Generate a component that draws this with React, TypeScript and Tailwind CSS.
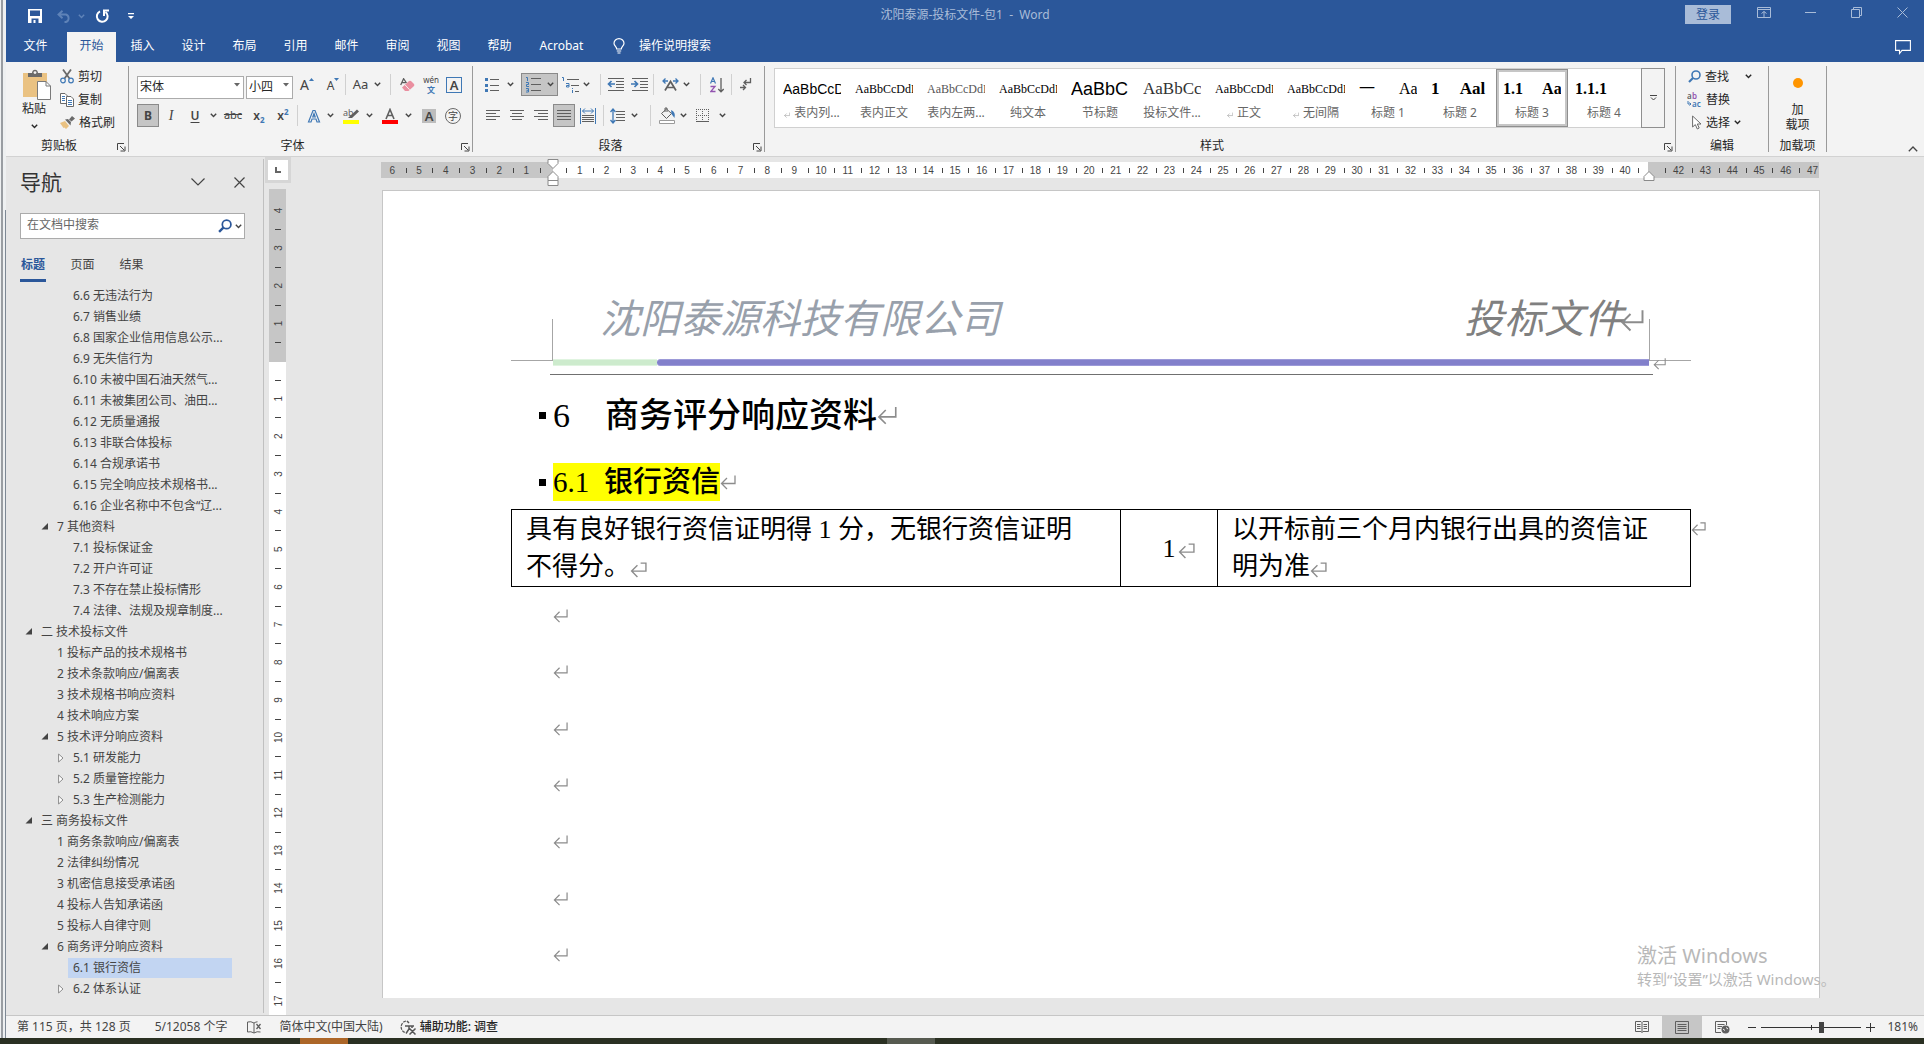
import React from "react";
import clsx from "clsx";

type IconProps = { className?: string };

const GRAY = "#5f5f5f";
const BLUE = "#3f78b5";

const Chevron = ({ className = "" }: IconProps) => (
  <svg width="7" height="5" viewBox="0 0 7 5" className={className}>
    <path d="M.8 .8 L3.5 3.5 L6.2 .8" fill="none" stroke="currentColor" strokeWidth="1.4" />
  </svg>
);

const Launcher = () => (
  <button aria-label="更多选项" className="absolute right-0.5 bottom-0">
    <svg width="9" height="9" viewBox="0 0 9 9" fill="none" stroke="#444">
      <path d="M.5 7 V.5 H7 M3 3 L7 7 M8 3.5 V8 H3.5" />
    </svg>
  </button>
);

const ReturnMark = ({
  size = 15,
  cell = false,
  className = "",
}: {
  size?: number;
  cell?: boolean;
  className?: string;
}) => (
  <svg
    width={size}
    height={size}
    viewBox="0 0 16 16"
    fill="none"
    stroke="#8c8c8c"
    strokeWidth="1.3"
    className={clsx("inline-block shrink-0", className)}
  >
    <path d={cell ? "M10 2 H15 V9.5 H1.5 M7 4 L1.5 9.5 L7 15" : "M15 1.5 V9.5 H1.5 M7 4 L1.5 9.5 L7 15"} />
  </svg>
);

const Tool = ({
  label,
  className = "w-6",
  active = false,
  children,
}: {
  label: string;
  className?: string;
  active?: boolean;
  children: React.ReactNode;
}) => (
  <button
    aria-label={label}
    className={clsx(
      "h-[23px] shrink-0 flex items-center justify-center text-[#444]",
      active && "bg-[#c5c5c5] border border-[#8a8a8a]",
      className,
    )}
  >
    {children}
  </button>
);

const Divider = ({ className = "mx-2" }: IconProps) => (
  <span className={clsx("w-px h-[21px] shrink-0 bg-[#d0d0d0]", className)} />
);

const Group = ({
  title,
  className,
  launcher = true,
  children,
}: {
  title: string;
  className: string;
  launcher?: boolean;
  children: React.ReactNode;
}) => (
  <section
    className={clsx(
      "relative h-[86px] mt-1 flex flex-col justify-between border-r border-[#9a9a9a] shrink-0",
      className,
    )}
  >
    {children}
    <h2 className={clsx("text-center text-[12px] leading-4 h-3.5", launcher && "pr-4")}>{title}</h2>
    {launcher && <Launcher />}
  </section>
);

// Horizontal lines at the given spans, used by all the paragraph icons
const Lines = ({ rows, stroke = GRAY }: { rows: number[][]; stroke?: string }) => (
  <path d={rows.map(([x1, x2, y]) => `M${x1} ${y}.5H${x2}`).join("")} stroke={stroke} fill="none" />
);

const AlignIcon = ({ rows }: { rows: number[][] }) => (
  <svg width="15" height="12" viewBox="0 0 15 12">
    <Lines rows={rows} />
  </svg>
);

const Magnifier = ({ size = 13, color = BLUE }: { size?: number; color?: string }) => (
  <svg width={size} height={size} viewBox="0 0 13 13" fill="none" stroke={color}>
    <circle cx="8" cy="5" r="4" strokeWidth="1.6" />
    <path d="M5 8 L1 12" strokeWidth="2.2" />
  </svg>
);

const tabs = ["插入", "设计", "布局", "引用", "邮件", "审阅", "视图", "帮助"];

const TitleBar = () => (
  <div className="h-8 flex items-center text-[#a9bcd8] relative">
    <div className="flex items-center pl-[22px] text-white">
      <button aria-label="保存">
        <svg width="14" height="14" viewBox="0 0 14 14">
          <path d="M0 0 H14 V14 H0 Z M2 1.5 V7 H12 V1.5 Z M3.5 9.5 V14 H5.5 V11 H7.5 V14 H10.5 V9.5 Z" fill="#fff" fillRule="evenodd" />
        </svg>
      </button>
      <button aria-label="撤消" className="ml-[15px] flex items-center gap-1.5 text-[#5f83b8]">
        <svg width="15" height="13" viewBox="0 0 15 13" fill="none" stroke="currentColor" strokeWidth="1.9">
          <path d="M5.5 .8 L1.5 4.5 L5.5 8.2 M1.8 4.5 H9 A4 4 0 0 1 9 12 H7.5" />
        </svg>
        <Chevron />
      </button>
      <button aria-label="重复" className="ml-2.5">
        <svg width="15" height="15" viewBox="0 0 15 15" fill="none" stroke="#fff" strokeWidth="2">
          <path d="M5 2.4 A5.4 5.4 0 1 0 10.5 3" />
          <path d="M9 7 V1.6 H14" />
        </svg>
      </button>
      <button aria-label="自定义快速访问工具栏" className="ml-[18px]">
        <svg width="6" height="7" viewBox="0 0 6 7" fill="#fff">
          <path d="M0 0 H6 V1.2 H0 Z M0 3 H6 L3 6 Z" />
        </svg>
      </button>
    </div>
    <h1 className="absolute left-1/2 -translate-x-1/2 bottom-2 text-[12px] leading-[18px] whitespace-pre">
      沈阳泰源-投标文件-包1{"  "}-{"  "}Word
    </h1>
    <div className="ml-auto flex items-center pr-4 pb-2">
      <button className="w-[46px] h-[19px] mt-1 mr-[26px] bg-[#a9bcd8] text-[#2b579a] text-[12px] leading-[19px]">登录</button>
      <button aria-label="功能区显示选项">
        <svg width="14" height="11" viewBox="0 0 14 11" fill="none" stroke="currentColor">
          <path d="M.5 .5 H13.5 V10.5 H.5 Z M.5 2.5 H13.5 M7 10 V4.5 M4.5 6.5 L7 4.5 L9.5 6.5" />
        </svg>
      </button>
      <button aria-label="最小化" className="ml-[34px]">
        <svg width="11" height="11" viewBox="0 0 11 11" stroke="currentColor">
          <path d="M0 5.5 H11" />
        </svg>
      </button>
      <button aria-label="向下还原" className="ml-[35px]">
        <svg width="11" height="11" viewBox="0 0 11 11" fill="none" stroke="currentColor">
          <path d="M.5 2.5 H8.5 V10.5 H.5 Z M2.5 2.5 V.5 H10.5 V8.5 H8.5" />
        </svg>
      </button>
      <button aria-label="关闭" className="ml-[35px]">
        <svg width="11" height="11" viewBox="0 0 11 11" stroke="currentColor">
          <path d="M.5 .5 L10.5 10.5 M10.5 .5 L.5 10.5" />
        </svg>
      </button>
    </div>
  </div>
);

const TabBar = () => (
  <nav className="h-[30px] flex gap-0.5 text-white text-[12px]">
    <button className="w-[59px] pb-0.5">文件</button>
    <button className="w-[49px] pb-0.5 bg-[#f3f3f3] text-[#2b579a]">开始</button>
    {tabs.map((tab) => (
      <button key={tab} className="w-[49px] pb-0.5">
        {tab}
      </button>
    ))}
    <button className="w-[71px] pb-0.5">Acrobat</button>
    <button className="ml-[14px] pb-0.5 flex items-center gap-[14px]">
      <svg width="12" height="16" viewBox="0 0 12 16" fill="none" stroke="#fff" strokeWidth="1.2">
        <path d="M3.7 11 C3.7 8.8 1 8 1 5.2 A5 4.6 0 0 1 11 5.2 C11 8 8.3 8.8 8.3 11 Z M3.8 13 H8.2 M4.5 15 H7.5" />
      </svg>
      操作说明搜索
    </button>
    <button aria-label="批注" className="ml-auto mr-[13px]">
      <svg width="16" height="15" viewBox="0 0 16 15" fill="none" stroke="#fff" strokeWidth="1.1">
        <path d="M.6 .6 H15.4 V10.4 H7 L4.5 13.5 V10.4 H.6 Z" />
      </svg>
    </button>
  </nav>
);

const ClipboardGroup = () => (
  <Group title="剪贴板" className="w-[123px]">
    <div className="flex">
      <button className="w-[54px] pl-1.5 pr-1 flex flex-col items-center text-[12px] leading-[18px]">
        <svg width="29" height="31" viewBox="0 0 29 31" className="mt-[3px] ml-1">
          <path d="M1 4 H25 V28 H1 Z" fill="#eac282" />
          <path d="M6 8 V4 H10 C10 -.5 16 -.5 16 4 H20 V8 Z" fill="#6a6a6a" />
          <circle cx="13" cy="3.6" r="1.4" fill="#f3f3f3" />
          <path d="M15.5 12.5 H24 L28.5 17 V30.5 H15.5 Z" fill="#fff" stroke="#7a7a7a" />
          <path d="M24 12.5 V17 H28.5" fill="none" stroke="#7a7a7a" />
        </svg>
        <span>粘贴</span>
        <Chevron className="mt-1.5" />
      </button>
      <div className="flex flex-col -mt-px text-[12px]">
        <button className="h-[23px] flex items-center gap-1">
          <svg width="14" height="15" viewBox="0 0 14 15" fill="none">
            <path d="M3 .5 L9.5 9.5 M11 .5 L4.5 9.5" stroke="#6a6a6a" strokeWidth="1.8" />
            <circle cx="3" cy="11.5" r="2.3" stroke={BLUE} strokeWidth="1.2" />
            <circle cx="11" cy="11.5" r="2.3" stroke={BLUE} strokeWidth="1.2" />
          </svg>
          剪切
        </button>
        <button className="h-[23px] flex items-center gap-1">
          <svg width="14" height="14" viewBox="0 0 14 14" fill="#fff" stroke="#6a6a6a">
            <path d="M.5 .5 H5 L7.5 3 V10.5 H.5 Z" />
            <path d="M6.5 3.5 H11 L13.5 6 V13.5 H6.5 Z" />
            <path d="M8 7.5 H12 M8 9.5 H12 M8 11.5 H12 M2 3.5 H5 M2 5.5 H5 M2 7.5 H5" stroke={BLUE} />
          </svg>
          复制
        </button>
        <button className="h-[23px] flex items-center gap-1">
          <svg width="15" height="14" viewBox="0 0 15 14">
            <path d="M0 7 L5 5 L9 10 L6 13 L4.5 11.5 L3.5 12 Z" fill="#eac282" />
            <path d="M5 3.5 L8 3 L11 6 L10.5 9.5 Z M9 3.5 L12 0 L15 2.5 L11.5 5.5 Z" fill="#6a6a6a" />
          </svg>
          格式刷
        </button>
      </div>
    </div>
  </Group>
);

const Combo = ({ label, value, className }: { label: string; value: string; className: string }) => (
  <div className={clsx("relative h-[23px] shrink-0", className)}>
    <select
      aria-label={label}
      className="appearance-none w-full h-full bg-white border border-[#ababab] pl-0.5 text-[12px] text-[#262626]"
    >
      <option>{value}</option>
    </select>
    <svg width="6" height="4" viewBox="0 0 6 4" className="absolute right-1 top-2.5 pointer-events-none">
      <path d="M0 0 H6 L3 3.5 Z" fill="#666" />
    </svg>
  </div>
);

const FontGroup = () => (
  <Group title="字体" className="w-[344px]">
    <div className="flex flex-col gap-2 pt-[7px] pl-2">
      <div className="flex items-center">
        <Combo label="字体" value="宋体" className="w-[107px] mr-0.5" />
        <Combo label="字号" value="小四" className="w-[47px]" />
        <Tool label="增大字号" className="w-7">
          <span className="text-[14px]">A</span>
          <svg width="5" height="3" viewBox="0 0 5 3" className="mb-2.5">
            <path d="M0 3 H5 L2.5 0 Z" fill={BLUE} />
          </svg>
        </Tool>
        <Tool label="减小字号">
          <span className="text-[12px] pt-0.5">A</span>
          <svg width="5" height="3" viewBox="0 0 5 3" className="mb-2.5">
            <path d="M0 0 H5 L2.5 3 Z" fill={BLUE} />
          </svg>
        </Tool>
        <Divider className="mr-1.5" />
        <Tool label="更改大小写" className="w-[30px] gap-1.5 text-[13px]">
          Aa <Chevron />
        </Tool>
        <Divider className="ml-2 mr-1" />
        <Tool label="清除所有格式">
          <svg width="15" height="14" viewBox="0 0 15 14">
            <path d="M.7 7 L3.6 .7 L6.5 5 M2 4.6 H6" fill="none" stroke={GRAY} strokeWidth="1.3" />
            <path d="M2 9.5 L9 3 Q10 2.3 11 3 L14 6 Q14.7 7 14 8 L8.5 13 H5 Z" fill="#ea8fa0" />
            <path d="M5 6.8 L9.6 11.8" stroke="#f3f3f3" />
          </svg>
        </Tool>
        <Tool label="拼音指南" className="w-6 flex-col text-[8px] leading-[10px]">
          <span>wén</span>
          <span className="text-[#3f78b5] font-bold">文</span>
        </Tool>
        <Tool label="字符边框" className="w-[22px]">
          <span className="w-4 h-4 border border-[#3f78b5] text-[13px] leading-[14px] font-semibold">A</span>
        </Tool>
      </div>
      <div className="flex items-center">
        <Tool label="加粗" className="w-[22px]" active>
          <b className="text-[12px]">B</b>
        </Tool>
        <Tool label="倾斜">
          <i className="text-[14px] font-['Liberation_Serif',serif]">I</i>
        </Tool>
        <Tool label="下划线">
          <span className="text-[12px] font-semibold underline underline-offset-2">U</span>
        </Tool>
        <Tool label="下划线样式" className="w-3">
          <Chevron />
        </Tool>
        <Tool label="删除线" className="w-7 text-[11px] line-through">abc</Tool>
        <Tool label="下标" className="w-6">
          <span className="text-[12px] font-semibold">x</span>
          <span className="text-[8px] text-[#3f78b5] font-bold pt-2">2</span>
        </Tool>
        <Tool label="上标" className="w-6">
          <span className="text-[12px] font-semibold">x</span>
          <span className="text-[8px] text-[#3f78b5] font-bold pb-2">2</span>
        </Tool>
        <Divider className="ml-0.5 mr-2" />
        <Tool label="文本效果" className="w-7 gap-1.5">
          <svg width="14" height="14" viewBox="0 0 14 14" fill="none">
            <path d="M1.5 13 L6 1.5 H8 L12.5 13 H10 L9 10 H5 L4 13 Z M5.8 8 H8.2 L7 4.5 Z" stroke={BLUE} strokeWidth="1.2" />
          </svg>
          <Chevron />
        </Tool>
        <Tool label="突出显示颜色" className="w-8 ml-2 gap-1.5">
          <svg width="17" height="16" viewBox="0 0 17 16" className="overflow-visible">
            <text x="0" y="8" fontSize="9" fontFamily="Noto Sans" fill={GRAY}>ab</text>
            <path d="M14 1.5 L16 3.5 L9 10 H5 L7 8 Z" fill={GRAY} />
            <path d="M0 12 H16 V16 H0 Z" fill="#ff0" />
          </svg>
          <Chevron />
        </Tool>
        <Tool label="字体颜色" className="w-8 ml-[7px] gap-1.5">
          <svg width="17" height="16" viewBox="0 0 17 16">
            <path d="M4 11 L8 1.5 L12 11 M5.5 7.5 H10.5" fill="none" stroke={GRAY} strokeWidth="1.6" />
            <path d="M0 12 H16 V16 H0 Z" fill="#f00" />
          </svg>
          <Chevron />
        </Tool>
        <Tool label="字符底纹" className="w-6 ml-1">
          <span className="w-3.5 h-3.5 bg-[#bdbdbd] text-[13px] leading-[14px] font-semibold">A</span>
        </Tool>
        <Tool label="带圈字符">
          <span className="w-4 h-4 rounded-full border border-[#6a6a6a] text-[10px] leading-[14px]">字</span>
        </Tool>
      </div>
    </div>
  </Group>
);

const ParagraphGroup = () => (
  <Group title="段落" className="w-[292px]">
    <div className="flex flex-col gap-2 pt-[7px] pl-2">
      <div className="flex items-center">
        <Tool label="项目符号" className="w-[37px] mr-[3px] gap-2">
          <svg width="14" height="15" viewBox="0 0 14 15">
            <path d="M5 2.5H14M5 8.5H14M5 13.5H14" stroke={GRAY} />
            <path d="M0 1H3V4H0ZM0 7H3V10H0ZM0 12H3V15H0Z" fill={BLUE} />
          </svg>
          <Chevron />
        </Tool>
        <Tool label="编号" className="w-[37px] gap-1.5" active>
          <svg width="15" height="17" viewBox="0 0 15 17">
            <path d="M5 2.5H15M5 8.5H15M5 14.5H15" stroke={GRAY} />
            <path d="M0 1.5H1.5V5M0 6.5H2.5V8.5H.5V10.5H3M0 12.5H2.5V16H0M.5 14.3H2.5" stroke={BLUE} fill="none" />
          </svg>
          <Chevron />
        </Tool>
        <Tool label="多级列表" className="w-8 ml-0.5 gap-1">
          <svg width="17" height="16" viewBox="0 0 17 16">
            <path d="M5 2.5H17M9 8.5H17M13 14.5H17" stroke={GRAY} />
            <path d="M0 .5H1.5V4M4 6.5H7V10H4.5V8.5H7M10.5 11V12M10.5 13V16" stroke={BLUE} fill="none" />
          </svg>
          <Chevron />
        </Tool>
        <Divider className="ml-2 mr-0.5" />
        <Tool label="减少缩进量">
          <svg width="17" height="13" viewBox="0 0 17 13">
            <Lines rows={[[1, 17, 0], [9, 17, 3], [9, 17, 6], [9, 17, 9], [1, 17, 12]]} />
            <path d="M8 6 H1.5 M4.5 3 L1.5 6 L4.5 9" stroke={BLUE} strokeWidth="1.7" fill="none" />
          </svg>
        </Tool>
        <Tool label="增加缩进量">
          <svg width="17" height="13" viewBox="0 0 17 13">
            <Lines rows={[[1, 17, 0], [9, 17, 3], [9, 17, 6], [9, 17, 9], [1, 17, 12]]} />
            <path d="M0 6 H6.5 M3.5 3 L6.5 6 L3.5 9" stroke={BLUE} strokeWidth="1.7" fill="none" />
          </svg>
        </Tool>
        <Divider className="ml-0.5 mr-1.5" />
        <Tool label="中文版式" className="w-8 gap-1">
          <svg width="17" height="13" viewBox="0 0 17 13" fill="none">
            <path d="M3 12.5 L8.5 3.5 L14 12.5 M5.5 9.5 H11.5" stroke={GRAY} strokeWidth="1.7" />
            <path d="M6 3 H1 M3.5 .5 L1 3 L3.5 5.5 M11 3 H16 M13.5 .5 L16 3 L13.5 5.5" stroke={BLUE} strokeWidth="1.3" />
          </svg>
          <Chevron />
        </Tool>
        <Divider className="ml-2 mr-1" />
        <Tool label="排序">
          <svg width="14" height="16" viewBox="0 0 14 16" fill="none">
            <path d="M.5 6.5 L3 .8 L5.5 6.5 M1.5 4.5 H4.5" stroke={BLUE} strokeWidth="1.2" />
            <path d="M.5 9.5 H5 L.8 14.5 H5.5" stroke="#9254b0" strokeWidth="1.3" />
            <path d="M11 1 V14.5 M8.3 12 L11 14.8 L13.7 12" stroke={GRAY} strokeWidth="1.3" />
          </svg>
        </Tool>
        <Divider className="ml-0.5 mr-0.5" />
        <Tool label="显示编辑标记">
          <svg width="12" height="14" viewBox="0 0 12 14" fill="none" stroke={GRAY} strokeWidth="1.3">
            <path d="M10.5 0 V4.5 H4 M6.5 2 L4 4.5 L6.5 7 M0 9.5 H5.5 M3 7 L5.5 9.5 L3 12" />
          </svg>
        </Tool>
      </div>
      <div className="flex items-center">
        <Tool label="左对齐">
          <AlignIcon rows={[[0, 14, 0], [0, 10, 3], [0, 14, 6], [0, 10, 9]]} />
        </Tool>
        <Tool label="居中">
          <AlignIcon rows={[[0, 14, 0], [2, 12, 3], [0, 14, 6], [2, 12, 9]]} />
        </Tool>
        <Tool label="右对齐">
          <AlignIcon rows={[[0, 14, 0], [4, 14, 3], [0, 14, 6], [4, 14, 9]]} />
        </Tool>
        <Tool label="两端对齐" className="w-[22px]" active>
          <AlignIcon rows={[[0, 14, 0], [0, 14, 3], [0, 14, 6], [0, 14, 9]]} />
        </Tool>
        <Tool label="分散对齐" className="w-[26px]">
          <svg width="16" height="16" viewBox="0 0 16 16" fill="none">
            <Lines rows={[[2, 14, 7], [2, 14, 9], [2, 14, 11], [2, 14, 13]]} />
            <path d="M.5 0 V16 M15.5 0 V16 M2.5 3 H13.5 M5 .5 L2.5 3 L5 5.5 M11 .5 L13.5 3 L11 5.5" stroke={BLUE} />
          </svg>
        </Tool>
        <Divider className="ml-0.5 mr-0.5" />
        <Tool label="行和段落间距" className="w-9 gap-1.5">
          <svg width="15" height="16" viewBox="0 0 15 16" fill="none">
            <Lines rows={[[6, 15, 3], [6, 15, 6], [6, 15, 9], [6, 15, 12]]} />
            <path d="M3 1 V15 M.5 4 L3 1 L5.5 4 M.5 12 L3 15 L5.5 12" stroke={BLUE} strokeWidth="1.3" />
          </svg>
          <Chevron />
        </Tool>
        <Divider className="ml-2 mr-1" />
        <Tool label="底纹" className="w-9 gap-1">
          <svg width="17" height="17" viewBox="0 0 17 17" fill="none">
            <path d="M2.5 6.5 L7.5 2 L12.5 6.5 L7.5 11.5 Z M6 5 V1 H8 V5" stroke={GRAY} />
            <path d="M12 3 Q17 5 15.5 11 L12.5 7 Z" fill={BLUE} />
            <path d="M.5 13.5 H15.5 V16.5 H.5 Z" fill="#fff" stroke="#9a9a9a" />
          </svg>
          <Chevron />
        </Tool>
        <Tool label="边框" className="w-9 ml-0.5 gap-2.5">
          <svg width="13" height="13" viewBox="0 0 13 13" fill="none" stroke={GRAY} strokeDasharray="1 1">
            <path d="M.5 0 V13 M12.5 0 V13 M6.5 0 V13 M0 .5 H13 M0 6.5 H13" />
            <path d="M0 12.5 H13" strokeDasharray="none" />
          </svg>
          <Chevron />
        </Tool>
      </div>
    </div>
  </Group>
);

const styleItems = [
  { sample: "AaBbCcD", name: "表内列...", mark: true, sans: true, font: "text-[14px] text-black" },
  { sample: "AaBbCcDdE", name: "表内正文", font: "text-[12px] text-black" },
  { sample: "AaBbCcDdEe", name: "表内左两...", font: "text-[12px] text-[#555]" },
  { sample: "AaBbCcDdE", name: "纯文本", font: "text-[12px] text-black" },
  { sample: "AaBbC", name: "节标题", sans: true, font: "text-[18px] text-black" },
  { sample: "AaBbCc", name: "投标文件...", font: "text-[17px] text-[#333]" },
  { sample: "AaBbCcDdE", name: "正文", mark: true, font: "text-[12px] text-black" },
  { sample: "AaBbCcDdE", name: "无间隔", mark: true, font: "text-[12px] text-black" },
  { sample: "一      Aa", name: "标题 1", font: "text-[16px] text-black" },
  { sample: "1     Aal", name: "标题 2", font: "text-[17px] font-bold text-black" },
  { sample: "1.1     Aa", name: "标题 3", font: "text-[16px] font-bold text-black" },
  { sample: "1.1.1", name: "标题 4", font: "text-[16px] font-bold text-black" },
];

const StylesGroup = () => (
  <Group title="样式" className="flex-1">
    <div className="flex h-[60px] mt-0.5 pl-[9px] pr-2.5">
      <div className="flex-1 min-w-0 flex overflow-hidden bg-white border border-r-0 border-[#d0d0d0] pl-px">
        {styleItems.map(({ sample, name, mark, sans, font }) => (
          <button
            key={name}
            className={clsx(
              "w-[72px] shrink-0 flex flex-col items-center overflow-hidden",
              name === "标题 3"
                ? "border-[3px] border-[#c6c6c6] outline outline-[#8f8f8f] -outline-offset-1 px-1 pt-1"
                : "px-[7px] pt-[7px]",
            )}
          >
            <span
              className={clsx(
                "w-full h-[26px] leading-[26px] text-left overflow-hidden whitespace-pre",
                font,
                sans
                  ? "font-['Liberation_Sans','Noto_Sans_CJK_SC',sans-serif]"
                  : "font-['Liberation_Serif','Noto_Sans_CJK_SC',serif]",
              )}
            >
              {sample}
            </span>
            <span className="flex items-center gap-1 text-[12px] leading-[22px] text-[#666] whitespace-nowrap">
              {mark && <ReturnMark size={6} className="mt-1" />}
              {name}
            </span>
          </button>
        ))}
      </div>
      <button aria-label="其他样式" className="w-6 flex items-center justify-center border border-[#8f8f8f]">
        <svg width="7" height="6" viewBox="0 0 7 6" fill="none" stroke="#444">
          <path d="M0 .5 H7 M1 2.5 L3.5 5 L6 2.5" />
        </svg>
      </button>
    </div>
  </Group>
);

const EditingGroup = () => (
  <Group title="编辑" className="w-[93px]" launcher={false}>
    <div className="flex flex-col text-[12px] pl-3 -mt-px">
      <button className="h-[23px] flex items-center gap-1">
        <Magnifier />
        查找
        <Chevron className="ml-3" />
      </button>
      <button className="h-[23px] flex items-center gap-1 -ml-px">
        <svg width="15" height="16" viewBox="0 0 15 16" fontFamily="Noto Sans" fontSize="8" fontWeight="600">
          <text x="0" y="7" fill={GRAY}>a</text>
          <text x="5" y="7" fill="#9254b0">b</text>
          <text x="5" y="15" fill={BLUE}>ac</text>
          <path d="M1 9 V12 H4 M2.5 10.5 L4 12 L2.5 13.5" fill="none" stroke={BLUE} />
        </svg>
        替换
      </button>
      <button className="h-[23px] flex items-center gap-1 pl-1">
        <svg width="10" height="15" viewBox="0 0 10 15" fill="#fff" stroke="#6a6a6a">
          <path d="M.6 1 V12 L3.3 9.6 L5.3 14 L7.2 13 L5.3 9 H9 Z" />
        </svg>
        选择
        <Chevron />
      </button>
    </div>
  </Group>
);

const Ribbon = () => (
  <div className="h-[95px] bg-[#f3f3f3] border-b border-[#d2d2d2] flex text-[#262626]">
    <ClipboardGroup />
    <FontGroup />
    <ParagraphGroup />
    <StylesGroup />
    <EditingGroup />
    <Group title="加载项" className="w-[58px]" launcher={false}>
      <button className="flex flex-col items-center text-[12px] leading-[15px] pt-3">
        <svg width="10" height="10" viewBox="0 0 10 10" className="mb-3.5">
          <circle cx="5" cy="5" r="5" fill="#ff9500" />
        </svg>
        <span>加</span>
        <span>载项</span>
      </button>
    </Group>
    <div className="w-[97px] shrink-0 flex items-end justify-end pr-1.5 pb-1">
      <button aria-label="折叠功能区">
        <svg width="10" height="6" viewBox="0 0 10 6" fill="none" stroke="#444" strokeWidth="1.3">
          <path d="M.8 5.2 L5 1 L9.2 5.2" />
        </svg>
      </button>
    </div>
  </div>
);

type Node = { text: string; level: 1 | 2 | 3; state?: "open" | "closed"; selected?: boolean };

const outline: Node[] = [
  { text: "6.6 无违法行为", level: 3 },
  { text: "6.7 销售业绩", level: 3 },
  { text: "6.8 国家企业信用信息公示...", level: 3 },
  { text: "6.9 无失信行为", level: 3 },
  { text: "6.10 未被中国石油天然气...", level: 3 },
  { text: "6.11 未被集团公司、油田...", level: 3 },
  { text: "6.12 无质量通报", level: 3 },
  { text: "6.13 非联合体投标", level: 3 },
  { text: "6.14 合规承诺书", level: 3 },
  { text: "6.15 完全响应技术规格书...", level: 3 },
  { text: "6.16 企业名称中不包含“辽...", level: 3 },
  { text: "7 其他资料", level: 2, state: "open" },
  { text: "7.1 投标保证金", level: 3 },
  { text: "7.2 开户许可证", level: 3 },
  { text: "7.3 不存在禁止投标情形", level: 3 },
  { text: "7.4 法律、法规及规章制度...", level: 3 },
  { text: "二 技术投标文件", level: 1, state: "open" },
  { text: "1 投标产品的技术规格书", level: 2 },
  { text: "2 技术条款响应/偏离表", level: 2 },
  { text: "3 技术规格书响应资料", level: 2 },
  { text: "4 技术响应方案", level: 2 },
  { text: "5 技术评分响应资料", level: 2, state: "open" },
  { text: "5.1 研发能力", level: 3, state: "closed" },
  { text: "5.2 质量管控能力", level: 3, state: "closed" },
  { text: "5.3 生产检测能力", level: 3, state: "closed" },
  { text: "三 商务投标文件", level: 1, state: "open" },
  { text: "1 商务条款响应/偏离表", level: 2 },
  { text: "2 法律纠纷情况", level: 2 },
  { text: "3 机密信息接受承诺函", level: 2 },
  { text: "4 投标人告知承诺函", level: 2 },
  { text: "5 投标人自律守则", level: 2 },
  { text: "6 商务评分响应资料", level: 2, state: "open" },
  { text: "6.1 银行资信", level: 3, selected: true },
  { text: "6.2 体系认证", level: 3, state: "closed" },
];

const indent = { 1: "pl-[18px]", 2: "pl-[34px]", 3: "pl-[50px]" };

const NavigationPane = () => (
  <aside className="w-[258px] shrink-0 my-0.5 border-r border-[#c0c0c0] text-[#444] overflow-hidden">
    <div className="flex items-center h-[54px] pl-3.5 pr-[18px] pb-2">
      <h2 className="text-[21px] leading-7 mr-auto text-[#333]">导航</h2>
      <button aria-label="任务窗格选项">
        <svg width="14" height="8" viewBox="0 0 14 8" fill="none" stroke="#444" strokeWidth="1.2">
          <path d="M.5 .5 L7 7 L13.5 .5" />
        </svg>
      </button>
      <button aria-label="关闭" className="ml-[29px]">
        <svg width="11" height="11" viewBox="0 0 11 11" stroke="#444" strokeWidth="1.2">
          <path d="M.5 .5 L10.5 10.5 M10.5 .5 L.5 10.5" />
        </svg>
      </button>
    </div>
    <div className="ml-3.5 mr-[18px] h-[26px] flex items-center bg-white border border-[#ababab] pr-0.5">
      <input
        aria-label="在文档中搜索"
        placeholder="在文档中搜索"
        className="flex-1 min-w-0 pl-1.5 pb-0.5 text-[12px] placeholder:text-[#666] outline-none"
      />
      <button aria-label="搜索" className="flex items-center gap-[3px]">
        <Magnifier size={14} color="#2b579a" />
        <Chevron />
      </button>
    </div>
    <div className="flex gap-6 ml-3.5 h-[46px] pt-[17px] text-[12px] leading-[18px]">
      <button className="w-[26px] h-[26px] pb-1.5 border-b-[3px] border-[#2b579a] font-bold text-[#2b579a]">标题</button>
      <button className="w-[25px] h-[23px] pb-1.5">页面</button>
      <button className="w-[25px] h-[23px] pb-1.5">结果</button>
    </div>
    <ul className="text-[12px] leading-[21px]">
      {outline.map(({ text, level, state, selected }) => (
        <li key={text} className={clsx("h-[21px] flex items-center", indent[level])}>
          <span className="w-3 shrink-0 text-[#444]">
            {state === "open" && (
              <svg width="7" height="7" viewBox="0 0 7 7" className="ml-px">
                <path d="M7 0 V6.5 H.5 Z" fill="#444" />
              </svg>
            )}
            {state === "closed" && (
              <svg width="6" height="10" viewBox="0 0 6 10" className="ml-0.5">
                <path d="M.6 1 L5 5 L.6 9 Z" fill="#fff" stroke="#8a8a8a" />
              </svg>
            )}
          </span>
          <a
            href="#doc"
            className={clsx(
              "h-5 leading-5 pl-[5px] whitespace-nowrap",
              selected && "w-[164px] bg-[#c2d5f2]",
            )}
          >
            {text}
          </a>
        </li>
      ))}
    </ul>
  </aside>
);

const VerticalRuler = () => {
  const unit = 37.65;
  const zero = 173;
  return (
    <div className="w-7 shrink-0 flex flex-col overflow-hidden">
      <button aria-label="左对齐制表符" className="size-[26px] shrink-0 bg-white border-[3px] border-[#d6d6d6] flex items-center justify-center ml-px">
        <svg width="6" height="6" viewBox="0 0 6 6">
          <path d="M1 0 V5 H6" fill="none" stroke="#666" strokeWidth="2" />
        </svg>
      </button>
      <svg width="17" height="827" className="mt-1.5 ml-[5px] shrink-0 bg-white">
        <rect width="17" height={zero} fill="#c6c6c6" />
        {Array.from({ length: 22 }, (_, i) => i - 4).map((n) => {
          const y = zero - 1 + n * unit;
          return (
            <g key={n} fill="#444">
              <rect x="6" y={Math.round(y + unit / 2)} width="6" height="1" />
              {n !== 0 && (
                <text x="9" y={y} transform={`rotate(-90 9 ${y})`} dy="4" textAnchor="middle" fontSize="10" fontFamily="Liberation Sans">
                  {Math.abs(n)}
                </text>
              )}
            </g>
          );
        })}
      </svg>
    </div>
  );
};

const HorizontalRuler = () => {
  const unit = 26.8;
  const zero = 171;
  const end = 1267;
  return (
    <svg width="100%" height="33" className="block overflow-visible shrink-0">
      <rect x="-1" y="5" width="100%" height="16" fill="#c6c6c6" />
      <rect x={zero} y="5" width={end - zero - 1} height="16" fill="#fff" />
      {Array.from({ length: 54 }, (_, i) => i - 6).map((n) => {
        const x = zero + n * unit;
        return (
          <g key={n} fill="#444">
            {n < 47 && <rect x={Math.round(x + unit / 2)} y="11" width="1" height="5" />}
            {n !== 0 && n !== 41 && (
              <text x={x} y="17" textAnchor="middle" fontSize="10" fontFamily="Liberation Sans">
                {Math.abs(n)}
              </text>
            )}
          </g>
        );
      })}
      <g fill="#fff" stroke="#8a8a8a">
        <path d={`M${zero - 5} 2.5 h10 v4 l-5 5 l-5 -5 Z`} />
        <path d={`M${zero} 14.5 l5 5 v4 h-10 v-4 Z`} />
        <path d={`M${zero - 5} 23.5 h10 v5 h-10 Z`} />
        <path d={`M${end} 14.5 l5 5 v4 h-10 v-4 Z`} />
      </g>
    </svg>
  );
};

const Bullet = () => <span className="size-[7px] bg-black mr-[7px] shrink-0" />;

const Document = () => (
  <article
    id="doc"
    className="flex-1 min-h-0 mb-[17px] bg-white border border-b-0 border-[#c6c6c6] px-[128px] pt-[94px] overflow-hidden text-black font-['Liberation_Serif','Noto_Sans_CJK_SC',serif]"
  >
    <header>
      <div className="flex items-end h-[76px]">
        <span className="size-[42px] border-r border-b border-[#a6a6a6]" />
        <div className="flex-1 h-full flex items-start justify-between pl-[47px] pr-[5px] text-[40px] leading-[70px] italic">
          <span className="text-[#98a0ab]">沈阳泰源科技有限公司</span>
          <span className="flex items-center text-[#808080]">
            投标文件
            <ReturnMark size={24} className="-ml-1" />
          </span>
        </div>
        <span className="size-[42px] border-l border-b border-[#a6a6a6]" />
      </div>
      <div className="flex items-start -mt-0.5 mx-[42px] h-[7px]">
        <div className="flex-1 h-[7px] flex">
          <span className="w-[104px] bg-[#cdebcd] border-y border-[#e0f4e0]" />
          <span className="flex-1 bg-[#8280cb] border-y border-[#9c9ad8] rounded-l-sm" />
        </div>
        <ReturnMark size={13} className="-mr-[17px] ml-1 -mt-0.5" />
      </div>
      <hr className="border-[#707070] ml-[39px] mr-[38px] mt-2" />
    </header>
    <h1 className="flex items-center h-20 pl-7 text-[34px] font-medium">
      <Bullet />
      <span className="w-[52px]">6</span>
      商务评分响应资料
      <ReturnMark size={20} />
    </h1>
    <h2 className="flex items-center h-[38px] mt-2 mb-2 pl-7 text-[29px] font-medium">
      <Bullet />
      <span className="h-[38px] leading-[38px] bg-[#ff0] flex w-[167px] justify-between">
        <span>6.1</span>
        <span>银行资信</span>
      </span>
      <ReturnMark size={16} />
    </h2>
    <div className="flex">
      <table className="w-full shrink-0 table-fixed border-collapse text-[26px] leading-[37px]">
        <colgroup>
          <col />
          <col className="w-[97px]" />
          <col className="w-[473px]" />
        </colgroup>
        <tbody>
          <tr>
            <td className="border border-black px-3.5 py-px align-top">
              <div className="max-w-[570px]">
                具有良好银行资信证明得 1 分，无银行资信证明不得分。
                <ReturnMark size={17} cell />
              </div>
            </td>
            <td className="border border-black text-center">
              1<ReturnMark size={17} cell className="ml-0.5 -mr-[19px]" />
            </td>
            <td className="border border-black px-3.5 py-px align-top">
              <div className="max-w-[430px]">
                以开标前三个月内银行出具的资信证明为准
                <ReturnMark size={17} cell />
              </div>
            </td>
          </tr>
        </tbody>
      </table>
      <ReturnMark size={15} cell className="mt-3" />
    </div>
    <div className="grid grid-rows-7 h-[396px] pl-[42px]">
      {Array.from({ length: 7 }).map((_, i) => (
        <p key={i} className="flex items-center">
          <ReturnMark size={15} />
        </p>
      ))}
    </div>
  </article>
);

const StatusBar = () => (
  <footer className="h-[23px] shrink-0 bg-[#f3f3f3] border-t border-[#c6c6c6] flex items-center text-[12px] text-[#444] pl-[11px] pr-1.5">
    <span>第 115 页，共 128 页</span>
    <span className="ml-6">5/12058 个字</span>
    <button aria-label="校对" className="ml-5">
      <svg width="15" height="13" viewBox="0 0 15 13" fill="none" stroke={GRAY}>
        <path d="M7 2 Q4 0 .5 1 V11 Q4 10 7 12 Q10 10 13.5 11 M7 2 V12 M7 2 Q9 .8 10.5 .8" />
        <path d="M9.5 3 L13.5 8 M13.5 3 L9.5 8" strokeWidth="1.3" />
      </svg>
    </button>
    <button className="ml-[17px]">简体中文(中国大陆)</button>
    <button className="ml-[17px] flex items-center gap-[3px] font-medium text-[#262626]">
      <svg width="17" height="15" viewBox="0 0 17 15" fill="none" stroke="#555" strokeWidth="1.2">
        <path d="M6 1 A6 6 0 0 0 5 12.5" strokeDasharray="3 1" />
        <path d="M7 1 L9 3 M5 6 H14 M9 6 V9 L6 13.5 M12 6 V8 M9.5 8.5 L15.5 14.5 M15.5 8.5 L9.5 14.5" strokeWidth="1.5" />
      </svg>
      辅助功能: 调查
    </button>
    <button aria-label="阅读视图" className="ml-auto">
      <svg width="14" height="12" viewBox="0 0 14 12" fill="none" stroke={GRAY}>
        <path d="M.5 .5 H6 L7 1.5 L8 .5 H13.5 V10.5 H8 L7 11.5 L6 10.5 H.5 Z M7 1.5 V11.5 M2 3.5 H5.5 M2 5.5 H5.5 M2 7.5 H5.5 M8.5 3.5 H12 M8.5 5.5 H12 M8.5 7.5 H12" />
      </svg>
    </button>
    <button aria-label="页面视图" className="ml-[13px] w-10 h-full bg-[#c6c6c6] flex items-center justify-center">
      <svg width="14" height="13" viewBox="0 0 14 13" fill="none" stroke={GRAY}>
        <path d="M.5 .5 H13.5 V12.5 H.5 Z M2.5 3.5 H11.5 M2.5 5.5 H11.5 M2.5 7.5 H11.5 M2.5 9.5 H11.5" />
      </svg>
    </button>
    <button aria-label="Web 版式视图" className="ml-[13px]">
      <svg width="15" height="13" viewBox="0 0 15 13" fill="none" stroke={GRAY}>
        <path d="M6 11.5 H.5 V.5 H11.5 V4 M2.5 3.5 H9.5 M2.5 5.5 H7 M2.5 7.5 H5.5" />
        <circle cx="10.5" cy="8.5" r="4" fill={GRAY} stroke="none" />
        <path d="M8 8 L10 9.5 M11 6.5 L13 8" stroke="#f3f3f3" />
      </svg>
    </button>
    <button aria-label="缩小" className="ml-[18px]">
      <svg width="8" height="9" viewBox="0 0 8 9" stroke="#333">
        <path d="M0 4.5 H8" />
      </svg>
    </button>
    <input
      type="range"
      aria-label="显示比例"
      min={0}
      max={100}
      defaultValue={61}
      className="appearance-none w-[100px] h-3 mx-[5px] bg-transparent bg-[linear-gradient(#333,#333),linear-gradient(#333,#333)] bg-[length:100%_1px,1px_5px] bg-center bg-no-repeat [&::-webkit-slider-thumb]:appearance-none [&::-webkit-slider-thumb]:w-[5px] [&::-webkit-slider-thumb]:h-[11px] [&::-webkit-slider-thumb]:bg-[#444]"
    />
    <button aria-label="放大">
      <svg width="9" height="9" viewBox="0 0 9 9" stroke="#333">
        <path d="M0 4.5 H9 M4.5 0 V9" />
      </svg>
    </button>
    <button className="ml-3">181%</button>
  </footer>
);

export default function App() {
  return (
    <div className="relative h-screen flex flex-col overflow-hidden bg-[#e6e6e6] font-['Noto_Sans','Noto_Sans_CJK_SC',sans-serif]">
      <div className="flex-1 min-h-0 flex">
        <div className="w-1.5 shrink-0 flex bg-[#eef0f1]">
          <span className="w-0.5 ml-px bg-[#999da2]" />
          <span className="w-px ml-auto mt-[210px] bg-[#7d8894]" />
        </div>
        <div className="flex-1 min-w-0 flex flex-col">
          <div className="bg-[#2b579a]">
            <TitleBar />
            <TabBar />
          </div>
          <Ribbon />
          <main className="flex-1 min-h-0 flex">
            <NavigationPane />
            <VerticalRuler />
            <div className="flex-1 min-w-0 flex flex-col pl-[90px] pr-[104px]">
              <HorizontalRuler />
              <Document />
            </div>
          </main>
          <StatusBar />
        </div>
      </div>
      <div className="h-1.5 shrink-0 bg-[#2a3022] flex">
        <span className="w-12 ml-[300px] bg-[#ac6628]" />
        <span className="w-12 ml-[539px] bg-[#565a50]" />
      </div>
      <div className="absolute right-[87px] bottom-14 w-[200px] text-[#b8b8b8] pointer-events-none whitespace-nowrap">
        <p className="text-[20px] leading-7">激活 Windows</p>
        <p className="text-[15px] leading-[18px]">转到“设置”以激活 Windows。</p>
      </div>
    </div>
  );
}
